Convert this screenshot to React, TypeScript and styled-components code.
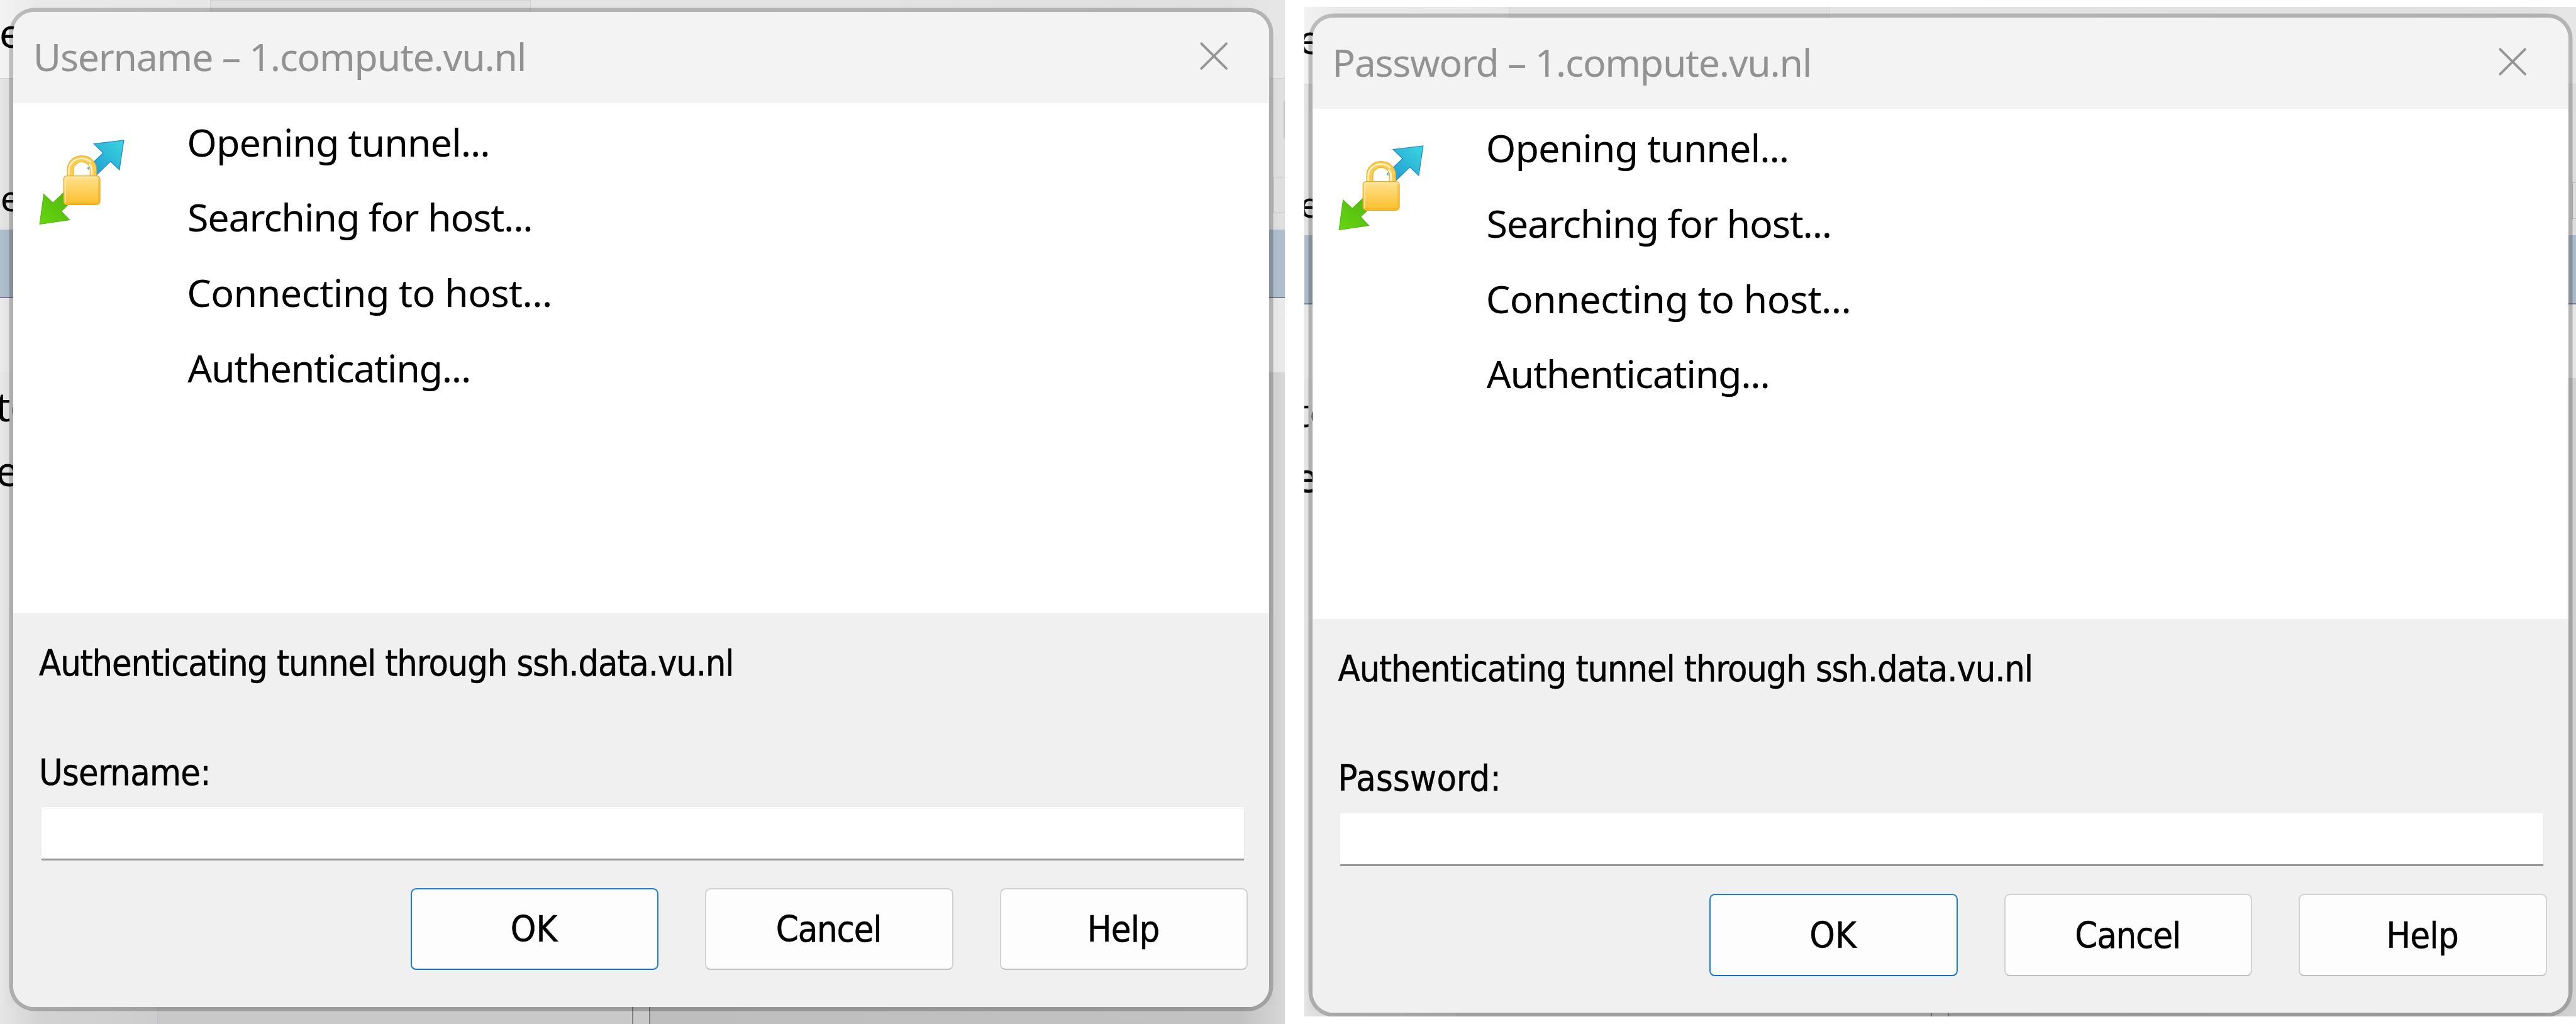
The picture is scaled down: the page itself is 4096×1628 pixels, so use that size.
import React from "react";
import styled, { createGlobalStyle } from "styled-components";

/* Design pixels to CSS pixels. */
const u = (n: number) => `${(n * 0.67127).toFixed(2)}px`;

const SEGOE = `"Noto Sans", "Open Sans", sans-serif`;
const TAHOMA = `"DejaVu Sans Condensed", "DejaVu Sans", sans-serif`;

const GlobalStyle = createGlobalStyle`
  * { box-sizing: border-box; }
  body { margin: 0; background: #fff; overflow: hidden; }
`;

const Page = styled.main`
  display: flex;
  align-items: flex-start;
  gap: ${u(45)};
  width: 4096px;
  height: 1628px;
  overflow: hidden;
  background: #fff;
`;

const Shot = styled.section<{ $w: number; $h: number; $top: number }>`
  flex: none;
  width: ${(p) => u(p.$w)};
  height: ${(p) => u(p.$h)};
  margin-top: ${(p) => u(p.$top)};
  overflow: hidden;
`;

const Scene = styled.div<{ $dx: number; $dy: number }>`
  position: relative;
  width: ${u(3044)};
  height: ${u(2425)};
  margin: ${(p) => `${u(-p.$dy)} 0 0 ${u(-p.$dx)}`};
`;

/* ---- the application window seen behind the dialog ---- */

const Backdrop = styled.div`
  display: flex;
  flex-direction: column;
  height: 100%;
`;

const TabBar = styled.div`
  height: ${u(184)};
  padding-left: ${u(497)};
  background: linear-gradient(to right, #f3f3f3 0, #e9e9e9 ${u(90)}, #e4e4e4 ${u(1300)}, #e1e1e1 ${u(2900)}, #e7e7e7 100%);
`;

const Tab = styled.div`
  width: ${u(760)};
  height: 100%;
  border: 1px solid #d0d0d0;
  background: #e0e0e0;
`;

const ToolArea = styled.div`
  display: flex;
  flex-direction: column;
  align-items: flex-end;
  height: ${u(359.5)};
  border-top: 1px solid #cfcfcf;
  background: linear-gradient(to right, #e5e5e5 0, #dcdcdc ${u(30)}, #dadada ${u(3005)}, #e1e1e1 100%);
`;

const Divider = styled.div`
  width: ${u(4)};
  height: ${u(88)};
  margin-top: ${u(55)};
  background: #c4c4c4;
`;

const FieldEdge = styled.div`
  width: ${u(28)};
  height: ${u(86)};
  margin-top: ${u(90)};
  border: 1px solid #b8b8b8;
  border-right: 0;
  background: #dedede;
`;

const SelectedRow = styled.div`
  height: ${u(163)};
  border-bottom: 2px solid #7b818c;
  background: linear-gradient(to right, #b1c0cf 0, #a7b5c3 ${u(30)}, #a9b7c5 ${u(3005)}, #b2c0cf 100%);
`;

const ListHead = styled.div`
  height: ${u(175)};
  background: linear-gradient(to right, #ebebeb 0, #e0e0e0 ${u(30)}, #e2e2e2 ${u(3005)}, #ebebeb 100%);
`;

const ListBody = styled.div`
  flex: 1;
  background: linear-gradient(to right, #e8e8e8 0, #dcdcdc ${u(30)}, #dcdcdc 50%, #cecece 50%, #cdcdcd ${u(3005)}, #d8d8d8 100%);
`;

const Footer = styled.div`
  display: flex;
  height: ${u(45)};
`;

const FooterLeft = styled.div`
  width: ${u(374)};
  border-right: 1px solid #b9c4ce;
  background: linear-gradient(to right, #e6e6e6 0, #d3d3d3 ${u(90)}, #cdcdcd 100%);
`;

const FooterMid = styled.div`
  width: ${u(1123)};
  background: #c9c9c9;
`;

const Splitter = styled.div`
  width: ${u(43)};
  border: 2px solid #808084;
  border-width: 0 2px;
  background: #c9c9c9;
`;

const FooterRight = styled.div`
  flex: 1;
  background: linear-gradient(to right, #bebebe 0, #c2c2c2 ${u(1400)}, #d8d8d8 100%);
`;

const PeekText = styled.span<{ $x: number; $baseline: number; $size: number }>`
  position: absolute;
  left: ${(p) => u(p.$x)};
  top: ${(p) => u(p.$baseline - 50 - p.$size * 0.388)};
  font: ${(p) => u(p.$size)} / ${u(100)} ${SEGOE};
  color: #000;
  white-space: nowrap;
`;

/* ---- the dialog ---- */

const DialogWindow = styled.div`
  position: absolute;
  left: ${u(31.7)};
  top: ${u(28)};
  display: flex;
  flex-direction: column;
  width: ${u(2974.6)};
  height: ${u(2356.5)};
  border-radius: ${u(50)};
  box-shadow: 0 0 0 ${u(9.7)} rgba(0, 0, 0, 0.21);
`;

const DialogClip = styled.div`
  display: flex;
  flex: 1;
  flex-direction: column;
  overflow: hidden;
  border-radius: ${u(50)};
  background: #f0f0f0;
`;

const TitleBar = styled.header`
  display: flex;
  flex: none;
  align-items: center;
  justify-content: space-between;
  height: ${u(216)};
  padding: 0 ${u(98)} ${u(7)} ${u(47)};
  background: #f3f3f3;
`;

const Title = styled.h1<{ $track: number }>`
  margin: ${u(4)} 0 0;
  font: 400 ${u(90.5)} / ${u(120)} ${SEGOE};
  letter-spacing: ${(p) => u(p.$track)};
  color: #929292;
  white-space: nowrap;
`;

const CloseIcon = styled.svg`
  flex: none;
  width: ${u(66)};
  height: ${u(66)};
  fill: none;
  stroke: #949494;
  stroke-width: 5.6;
  stroke-linecap: round;
`;

const Progress = styled.div`
  display: flex;
  flex: none;
  align-items: flex-start;
  height: ${u(1208.5)};
  padding: ${u(3)} 0 0 ${u(59.3)};
  background: #fff;
`;

const LockArt = styled.svg`
  flex: none;
  width: ${u(206)};
  height: ${u(206)};
  margin: ${u(82)} ${u(146)} 0 0;
`;

const Steps = styled.ul`
  margin: 0;
  padding: 0;
  list-style: none;
`;

const Step = styled.li<{ $track: number; $indent: number }>`
  padding-left: ${(p) => u(p.$indent)};
  font: ${u(91)} / ${u(178.3)} ${SEGOE};
  letter-spacing: ${(p) => u(p.$track)};
  color: #000;
  white-space: nowrap;
`;

const Panel = styled.form`
  display: flex;
  flex: 1;
  flex-direction: column;
  padding: ${u(68)} ${u(50)} 0 ${u(64.5)};
  background: #f0f0f0;
`;

const Line = styled.label<{ $track: number; $before?: number }>`
  margin: ${(p) => u(p.$before ?? 0)} 0 0 ${u(-3.7)};
  font: ${u(85.2)} / ${u(100)} ${TAHOMA};
  letter-spacing: ${(p) => u(p.$track)};
  color: #000;
  -webkit-text-stroke: 0.5px #000;
  white-space: nowrap;
`;

const Field = styled.input`
  height: ${u(128)};
  margin: ${u(30)} ${u(8)} 0 0;
  padding: 0 ${u(20)};
  border: 1px solid #ebebeb;
  border-bottom: 3px solid #969696;
  border-radius: 2px;
  outline: 0;
  background: #fff;
`;

const Actions = styled.div`
  display: flex;
  justify-content: flex-end;
  gap: ${u(110)};
  margin-top: ${u(65)};
`;

const Button = styled.button<{ $primary?: boolean; $track: number }>`
  width: ${u(588)};
  height: ${u(194.6)};
  padding: ${u(3)} ${u(3)} 0 0;
  border: 2px solid ${(p) => (p.$primary ? "#1a80d4" : "#d2d2d2")};
  border-bottom-color: ${(p) => (p.$primary ? "#1473c2" : "#c0c0c0")};
  border-radius: ${u(13)};
  background: #fdfdfd;
  font: ${u(85.6)} / ${u(100)} ${TAHOMA};
  letter-spacing: ${(p) => u(p.$track)};
  color: #000;
  -webkit-text-stroke: 0.5px #000;
`;

const TunnelIcon = ({ id }: { id: string }) => (
  <LockArt viewBox="0 0 206 206">
    <defs>
      <linearGradient id={`${id}-blue`} x1="1" y1="0" x2="0" y2="1">
        <stop offset="0" stopColor="#3ad6e0" />
        <stop offset="1" stopColor="#1f96cf" />
      </linearGradient>
      <linearGradient id={`${id}-green`} x1="0" y1="1" x2="1" y2="0">
        <stop offset="0" stopColor="#66d80f" />
        <stop offset="1" stopColor="#52b40f" />
      </linearGradient>
      <linearGradient id={`${id}-gold`} x1="0" y1="0" x2="0" y2="1">
        <stop offset="0" stopColor="#ffe18f" />
        <stop offset="1" stopColor="#fcbf2a" />
      </linearGradient>
    </defs>
    <path
      d="M131.5 11.5 202.3 2.8 192 73 171 53 137 86 115.5 69.5 153.5 33Z"
      fill={`url(#${id}-blue)`}
      stroke="#1f86cb"
      strokeWidth="1.8"
    />
    <path
      d="M12.8 131 3.2 201.8 74 191.6 54.4 171 76 150 62 125 34.6 151Z"
      fill={`url(#${id}-green)`}
      stroke="#55b410"
      strokeWidth="1.6"
    />
    <path d="M84 87V72a19 16.5 0 0 1 38 0V87Z" fill="#fff" />
    <path d="M120 65l-4.5 4 4.5 5z" fill="#4c9fb8" />
    <path d="M76 90V72a27 25 0 0 1 54 0V90" fill="none" stroke="#e9b02a" strokeWidth="16.5" />
    <path d="M76 90V72a27 25 0 0 1 54 0V90" fill="none" stroke="#fccd50" strokeWidth="13" />
    <path d="M72.4 86V72a30 28 0 0 1 52 -17" fill="none" stroke="#fff3cd" strokeWidth="3.4" />
    <path d="M126 86V72q0-8-6-12" fill="none" stroke="#fdf0cf" strokeWidth="4.4" />
    <rect x="60" y="87.4" width="86" height="68" rx="7.5" fill={`url(#${id}-gold)`} stroke="#e9ac22" strokeWidth="2" />
    <path d="M64 150V95q0-4 4-4h70" fill="none" stroke="#ffebb0" strokeWidth="2.2" />
    <path d="M143 94v54q0 4-4 4H66" fill="none" stroke="#eeb02c" strokeWidth="2.6" opacity=".6" />
  </LockArt>
);

const steps = [
  { text: "Opening tunnel...", track: -1.55, indent: 0 },
  { text: "Searching for host...", track: -1.85, indent: 1 },
  { text: "Connecting to host...", track: -0.95, indent: 0 },
  { text: "Authenticating...", track: -2, indent: 1.5 },
];

const BackWindow = () => (
  <Backdrop>
    <TabBar>
      <Tab />
    </TabBar>
    <ToolArea>
      <Divider />
      <FieldEdge />
    </ToolArea>
    <SelectedRow />
    <ListHead />
    <ListBody />
    <Footer>
      <FooterLeft />
      <FooterMid />
      <Splitter />
      <FooterRight />
    </Footer>
    <PeekText $x={-2} $baseline={114.5} $size={96}>e</PeekText>
    <PeekText $x={1} $baseline={501.5} $size={84}>e</PeekText>
    <PeekText $x={-10} $baseline={999} $size={96}>to</PeekText>
    <PeekText $x={-10} $baseline={1152} $size={97}>e</PeekText>
  </Backdrop>
);

type PromptProps = { id: string; kind: string; titleTrack: number; labelTrack: number };

const Prompt = ({ id, kind, titleTrack, labelTrack }: PromptProps) => (
  <DialogWindow>
    <DialogClip>
      <TitleBar>
        <Title $track={titleTrack}>{kind} – 1.compute.vu.nl</Title>
        <CloseIcon viewBox="0 0 66 66">
          <path d="M3.5 3.5 62.5 62.5M62.5 3.5 3.5 62.5" />
        </CloseIcon>
      </TitleBar>
      <Progress>
        <TunnelIcon id={id} />
        <Steps>
          {steps.map((s) => (
            <Step key={s.text} $track={s.track} $indent={s.indent}>
              {s.text}
            </Step>
          ))}
        </Steps>
      </Progress>
      <Panel>
        <Line as="p" $track={-1.71}>Authenticating tunnel through ssh.data.vu.nl</Line>
        <Line htmlFor={id} $track={labelTrack} $before={159.6}>{kind}:</Line>
        <Field id={id} type={kind === "Password" ? "password" : "text"} />
        <Actions>
          <Button type="button" $primary $track={0}>OK</Button>
          <Button type="button" $track={-1.9}>Cancel</Button>
          <Button type="button" $track={-1.2}>Help</Button>
        </Actions>
      </Panel>
    </DialogClip>
  </DialogWindow>
);

export default function App() {
  return (
    <>
      <GlobalStyle />
      <Page>
        <Shot $w={3044} $h={2426} $top={0}>
          <Scene $dx={0} $dy={0}>
            <BackWindow />
            <Prompt id="username" kind="Username" titleTrack={-1.9} labelTrack={-1.15} />
          </Scene>
        </Shot>
        <Shot $w={3014} $h={2390.5} $top={17}>
          <Scene $dx={12} $dy={3}>
            <BackWindow />
            <Prompt id="password" kind="Password" titleTrack={-1.95} labelTrack={0.35} />
          </Scene>
        </Shot>
      </Page>
    </>
  );
}
